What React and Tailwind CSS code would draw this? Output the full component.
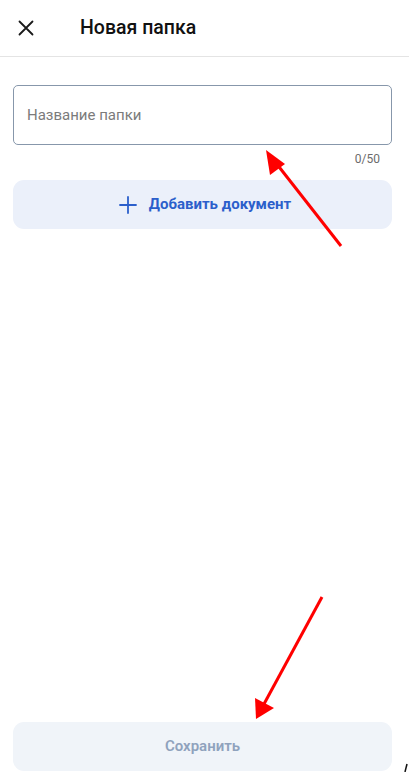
const CloseIcon = () => (
  <svg width="16" height="16" viewBox="0 0 16 16" fill="none" stroke="#1a1a1a" strokeWidth="1.8" strokeLinecap="round">
    <path d="M1.5 1.5 L14.5 14.5 M14.5 1.5 L1.5 14.5" />
  </svg>
);

const PlusIcon = () => (
  <svg width="18" height="18" viewBox="0 0 18 18" fill="none" stroke="#2b5fcb" strokeWidth="1.8" strokeLinecap="round">
    <path d="M9 1 V17 M1 9 H17" />
  </svg>
);

// red annotation arrows drawn over the screen
const Arrows = () => (
  <svg className="absolute inset-0 pointer-events-none" width="409" height="772" viewBox="0 0 409 772">
    <line x1="341" y1="246" x2="276" y2="163" stroke="#ff0000" strokeWidth="3" />
    <polygon points="266,150 285,164 270,175" fill="#ff0000" />
    <line x1="322" y1="597" x2="264" y2="704" stroke="#ff0000" strokeWidth="3" />
    <polygon points="256,719 255,698 274,708" fill="#ff0000" />
    <line x1="407" y1="764" x2="405" y2="772" stroke="#111" strokeWidth="1.5" />
  </svg>
);

export default function App() {
  return (
    <div className="relative w-full h-[772px] flex flex-col bg-white overflow-hidden font-['Roboto',sans-serif]">
      <header className="h-[57px] flex items-center px-[18px] border-b border-[#e4e4e4] shrink-0">
        <CloseIcon />
        <h1 className="ml-[46px] text-[19.5px] font-medium text-[#111]">Новая папка</h1>
      </header>

      <div className="pl-[13px] pr-[17px] pt-[28px]">
        <div className="h-[60px] flex items-center px-[13px] border border-[#8797ab] rounded-[5px]">
          <span className="text-[15px] text-[#7b7b7b]">Название папки</span>
        </div>
        <div className="text-right text-[12px] text-[#6b6b6b] pr-[12px] mt-[6px] leading-4">0/50</div>
        <button className="mt-[13px] w-full h-[49px] rounded-[11px] bg-[#ebf0fa] flex items-center justify-center gap-3 pl-[5px]">
          <PlusIcon />
          <span className="text-[15px] font-bold text-[#2b5fcb]">Добавить документ</span>
        </button>
      </div>

      <div className="flex-1" />

      <div className="pl-[13px] pr-[17px] pb-[1px]">
        <button className="w-full h-[49px] rounded-[11px] bg-[#f0f4f9] flex items-center justify-center">
          <span className="text-[15px] font-semibold text-[#8fa2bd]">Сохранить</span>
        </button>
      </div>

      <Arrows />
    </div>
  );
}
